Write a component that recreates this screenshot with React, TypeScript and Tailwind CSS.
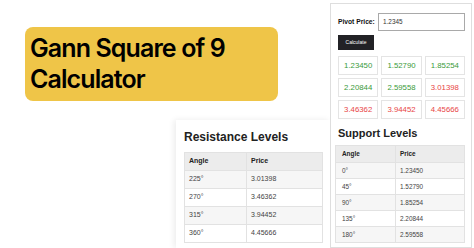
const resistance = [
  ["225°", "3.01398"],
  ["270°", "3.46362"],
  ["315°", "3.94452"],
  ["360°", "4.45666"],
];

const support = [
  ["0°", "1.23450"],
  ["45°", "1.52790"],
  ["90°", "1.85254"],
  ["135°", "2.20844"],
  ["180°", "2.59558"],
];

const grid: { v: string; up: boolean }[] = [
  { v: "1.23450", up: true },
  { v: "1.52790", up: true },
  { v: "1.85254", up: true },
  { v: "2.20844", up: true },
  { v: "2.59558", up: true },
  { v: "3.01398", up: false },
  { v: "3.46362", up: false },
  { v: "3.94452", up: false },
  { v: "4.45666", up: false },
];

const sans = { fontFamily: '"Liberation Sans", Arial, sans-serif' };

export default function App() {
  return (
    <div className="flex h-[248px] w-[474px] overflow-hidden bg-white" style={sans}>
      <div className="flex w-[330px] shrink-0 flex-col">
        <div
          className="ml-[25px] mt-[27px] flex h-[74px] w-[253px] flex-col justify-center rounded-[8px] bg-[#efc548] pl-[5px] text-[25px] font-semibold leading-[31px] text-black"
          style={{ fontFamily: 'Inter, "Noto Sans", sans-serif', letterSpacing: "-0.9px" }}
        >
          <span>Gann Square of 9</span>
          <span>Calculator</span>
        </div>
        <div className="ml-[176px] mt-[19px] flex-1 bg-white pl-[8px] pr-[7px] pt-[9px] shadow-[-2px_0_6px_rgba(0,0,0,0.08)]">
          <h2 className="text-[12px] font-bold leading-[16px] text-[#222]">Resistance Levels</h2>
          <table className="mt-[7px] w-[139px] border-collapse text-[7px] text-[#444]">
            <thead>
              <tr className="h-[18px] bg-[#ececec]">
                <th className="w-[62px] border border-[#e2e2e2] pl-[4px] text-left font-bold text-[#222]">Angle</th>
                <th className="border border-[#e2e2e2] pl-[4px] text-left font-bold text-[#222]">Price</th>
              </tr>
            </thead>
            <tbody>
              {resistance.map(([a, p], i) => (
                <tr key={a} className={i % 2 === 0 ? "h-[18px] bg-[#f6f6f6]" : "h-[18px] bg-white"}>
                  <td className="border border-[#e2e2e2] pl-[4px]">{a}</td>
                  <td className="border border-[#e2e2e2] pl-[4px]">{p}</td>
                </tr>
              ))}
            </tbody>
          </table>
        </div>
      </div>

      <div className="mt-[3px] flex w-[142px] shrink-0 flex-col border border-[#dedede] bg-white pl-[7px] pr-[6px]">
        <div className="mt-[9px] flex items-center gap-[3px]">
          <span className="w-[37px] text-[6.7px] font-bold text-[#111]">Pivot Price:</span>
          <div className="flex h-[18px] w-[87px] items-center border border-[#a9a9a9] pl-[4px] text-[6.4px] text-[#333]">
            1.2345
          </div>
        </div>
        <button className="mt-[4px] h-[15px] w-[36px] bg-[#222226] text-[5px] text-white">Calculate</button>
        <div className="mt-[6px] grid w-[127px] grid-cols-3 gap-[3px]">
          {grid.map((c) => (
            <div
              key={c.v}
              className={
                c.up
                  ? "flex h-[19px] items-center justify-center border border-[#e4e4e4] text-[7.8px] text-[#3a9a3a]"
                  : "flex h-[19px] items-center justify-center border border-[#e4e4e4] text-[7.8px] text-[#e84545]"
              }
            >
              {c.v}
            </div>
          ))}
        </div>
        <h2 className="mt-[7px] text-[11px] font-bold leading-[14px] text-[#222]">Support Levels</h2>
        <table className="mt-[5px] -ml-[3px] w-[130px] border-collapse text-[6.4px] text-[#444]">
          <thead>
            <tr className="h-[17px] bg-[#ececec]">
              <th className="w-[60px] border border-[#e2e2e2] pl-[6px] text-left font-bold text-[#222]">Angle</th>
              <th className="border border-[#e2e2e2] pl-[4px] text-left font-bold text-[#222]">Price</th>
            </tr>
          </thead>
          <tbody>
            {support.map(([a, p], i) => (
              <tr key={a} className={i % 2 === 0 ? "h-[16px] bg-[#f6f6f6]" : "h-[16px] bg-white"}>
                <td className="border border-[#e2e2e2] pl-[6px]">{a}</td>
                <td className="border border-[#e2e2e2] pl-[4px]">{p}</td>
              </tr>
            ))}
          </tbody>
        </table>
      </div>
    </div>
  );
}
